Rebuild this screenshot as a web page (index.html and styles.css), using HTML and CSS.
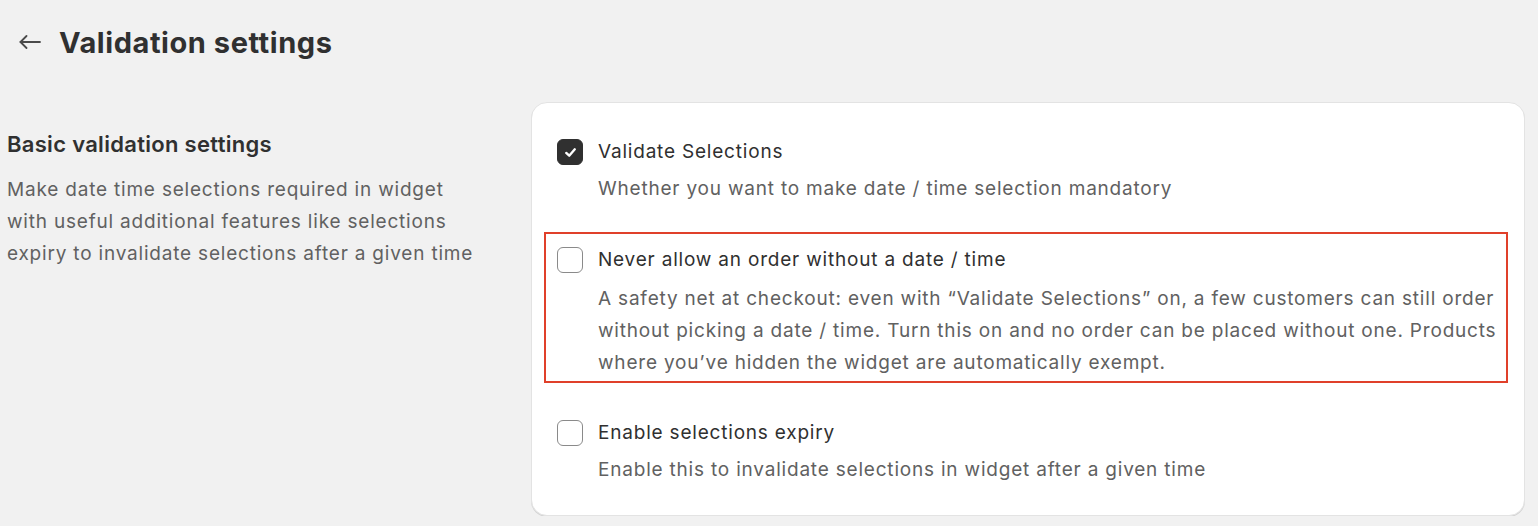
FILE: index.html
```html
<!DOCTYPE html>
<html lang="en">
<head>
<meta charset="utf-8">
<title>Validation settings</title>
<link rel="stylesheet" href="styles.css">
</head>
<body>
<div class="page">
  <header class="page-header">
    <button class="back" aria-label="Back">
      <svg width="22" height="14" viewBox="0 0 22 14" fill="none" stroke="#4a4a4a" stroke-width="1.8" stroke-linecap="round" stroke-linejoin="round">
        <path d="M21 7H1.5"/>
        <path d="M7.5 1L1.5 7L7.5 13"/>
      </svg>
    </button>
    <h1 class="page-title">Validation settings</h1>
  </header>

  <section class="layout">
    <div class="annotation">
      <h2 class="annotation-title">Basic validation settings</h2>
      <p class="annotation-text">Make date time selections required in widget with useful additional features like selections expiry to invalidate selections after a given time</p>
    </div>

    <div class="card">
      <div class="option option-first">
        <label class="option-row">
          <span class="checkbox checked">
            <svg width="15" height="15" viewBox="0 0 14 14" fill="none" stroke="#fff" stroke-width="2.2" stroke-linecap="round" stroke-linejoin="round"><path d="M3 7.4L5.8 10L11 4"/></svg>
          </span>
          <span class="option-label">Validate Selections</span>
        </label>
        <p class="option-help">Whether you want to make date / time selection mandatory</p>
      </div>

      <div class="option option-highlight">
        <label class="option-row">
          <span class="checkbox"></span>
          <span class="option-label">Never allow an order without a date / time</span>
        </label>
        <p class="option-help">A safety net at checkout: even with “Validate Selections” on, a few customers can still order without picking a date / time. Turn this on and no order can be placed without one. Products where you’ve hidden the widget are automatically exempt.</p>
      </div>

      <div class="option option-last">
        <label class="option-row">
          <span class="checkbox"></span>
          <span class="option-label">Enable selections expiry</span>
        </label>
        <p class="option-help">Enable this to invalidate selections in widget after a given time</p>
      </div>
    </div>
  </section>
</div>
</body>
</html>
```

FILE: styles.css
```css
* {
  box-sizing: border-box;
}

html, body {
  margin: 0;
  padding: 0;
  background: #f1f1f1;
}

body {
  font-family: Inter, "Noto Sans", "Liberation Sans", sans-serif;
  color: #303030;
  -webkit-font-smoothing: antialiased;
}

.page {
  padding: 0 13px 0 7px;
}

.page-header {
  display: flex;
  align-items: center;
  gap: 18px;
  height: 84px;
  padding-left: 11px;
}

.back {
  display: flex;
  align-items: center;
  justify-content: center;
  width: 23px;
  height: 24px;
  padding: 0;
  border: 0;
  background: none;
}

.page-title {
  margin: 0;
  font-size: 29px;
  font-weight: 700;
  letter-spacing: 0.55px;
  color: #303030;
}

.layout {
  display: grid;
  grid-template-columns: 524px 1fr;
  align-items: start;
  padding-top: 18px;
}

.annotation {
  padding-top: 26px;
}

.annotation-title {
  margin: 0 0 14px;
  font-size: 22px;
  line-height: 32px;
  font-weight: 600;
  letter-spacing: 0.3px;
  color: #303030;
}

.annotation-text {
  margin: 0;
  width: 480px;
  font-size: 19px;
  line-height: 32px;
  letter-spacing: 0.8px;
  color: #616161;
}

.card {
  background: #fff;
  border: 1px solid #e3e3e3;
  border-radius: 16px;
  box-shadow: 0 1px 0 #d4d4d4;
  padding: 33px 26px 29px 25px;
}

.option-row {
  display: flex;
  align-items: center;
  gap: 15px;
  height: 32px;
}

.checkbox {
  flex: none;
  display: flex;
  align-items: center;
  justify-content: center;
  width: 26px;
  height: 26px;
  border: 1.5px solid #8a8a8a;
  border-radius: 6px;
  background: #fff;
}

.checkbox.checked {
  background: #303030;
  border-color: #303030;
}

.option-label {
  font-size: 19px;
  line-height: 32px;
  letter-spacing: 0.8px;
  color: #303030;
}

.option-help {
  margin: 5px 0 0 41px;
  font-size: 19px;
  line-height: 32px;
  letter-spacing: 0.8px;
  color: #616161;
}

.option-highlight {
  margin: 27px -10px 0 -13px;
  padding: 10px 8px 2px 11px;
  border: 2px solid #e0402a;
}

.option-highlight .option-help {
  margin-top: 7px;
}

.option-last {
  margin-top: 34px;
}
```
